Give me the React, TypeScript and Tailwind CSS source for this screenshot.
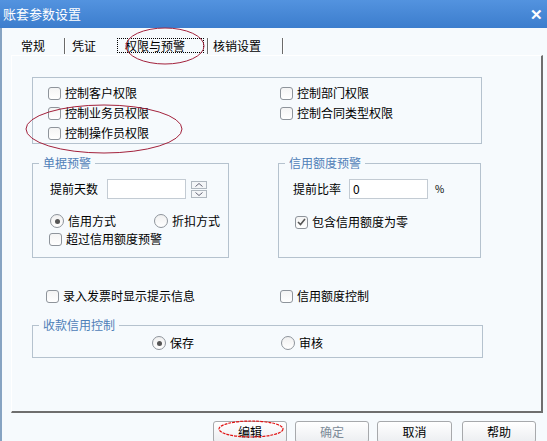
import React from 'react';

// === small controls ===
function Check({ checked = false }: { checked?: boolean }) {
  return (
    <span className="relative flex h-[13px] w-[13px] shrink-0 items-center justify-center rounded-[3px] border border-[#8e949b] bg-gradient-to-b from-[#f4f4f4] to-white">
      {checked && (
        <svg width="9" height="8" viewBox="0 0 9 8">
          <path d="M1 4 L3.5 6.5 L8 1" fill="none" stroke="#555" strokeWidth="1.6" />
        </svg>
      )}
    </span>
  );
}

function Radio({ checked = false }: { checked?: boolean }) {
  return (
    <span className="flex h-[14px] w-[14px] shrink-0 items-center justify-center rounded-full border border-[#8e949b] bg-gradient-to-b from-[#f0f0f0] to-white">
      {checked && <span className="h-[5px] w-[5px] rounded-full bg-[#555]" />}
    </span>
  );
}

function CheckRow({ label, checked }: { label: string; checked?: boolean }) {
  return (
    <div className="flex h-[20px] items-center gap-[4px]">
      <Check checked={checked} />
      <span>{label}</span>
    </div>
  );
}

function RadioRow({ label, checked }: { label: string; checked?: boolean }) {
  return (
    <div className="flex items-center gap-[4px]">
      <Radio checked={checked} />
      <span>{label}</span>
    </div>
  );
}

function Group({ title, className, children }: { title: string; className: string; children: React.ReactNode }) {
  return (
    <div className={`relative border border-[#b5c2ce] ${className}`}>
      <span className="absolute left-[6px] top-[-9px] bg-[#f6fafd] px-[4px] leading-[16px] text-[#4f80b8]">{title}</span>
      {children}
    </div>
  );
}

function Sep() {
  return <span className="block h-[16px] w-[2px] border-l border-r border-l-[#6a6a6a] border-r-white" />;
}

function Btn({ label, disabled }: { label: string; disabled?: boolean }) {
  return (
    <button
      className={`flex h-[22px] w-full items-center justify-center rounded-[3px] border border-[#a7a9ac] bg-gradient-to-b from-white to-[#eceef1] ${
        disabled ? 'text-[#7d8b98]' : 'text-black'
      }`}
    >
      {label}
    </button>
  );
}

export default function App() {
  return (
    <div className="relative h-[441px] w-[547px] overflow-hidden bg-[#f6fafd] text-[12px] leading-[14px] text-black [font-family:'Noto_Sans_CJK_SC',sans-serif]">
      {/* Title bar */}
      <div className="flex h-[28px] items-center justify-between bg-gradient-to-b from-[#5393df] to-[#3c7dcd] pl-[3px] pr-[4px] text-[13px] text-white">
        <span>账套参数设置</span>
        <span className="text-[15px] font-bold">✕</span>
      </div>

      <div className="h-[413px] border-l-[2px] border-[#86a3c2]">
        {/* Tabs */}
        <div className="flex h-[27px] items-center pl-[19px] pt-[8px]">
          <span>常规</span>
          <span className="ml-[19px]"><Sep /></span>
          <span className="ml-[6px]">凭证</span>
          <span className="ml-[21px] w-[87px] border border-dotted border-black pl-[7px] leading-[13px]">权限与预警</span>
          <span className="ml-[3px]"><Sep /></span>
          <span className="ml-[4px]">核销设置</span>
          <span className="ml-[21px]"><Sep /></span>
        </div>

        {/* Tab page */}
        <div className="ml-[9px] h-[358px] w-[532px] border-b-2 border-l border-r-2 border-t border-b-[#6e6e6e] border-l-white border-r-[#6e6e6e] border-t-white pl-[20px] pt-[21px]">
          <div className="flex h-[67px] w-[450px] border border-[#b5c2ce] pl-[15px] pt-[5px]">
            <div className="w-[232px]">
              <CheckRow label="控制客户权限" />
              <CheckRow label="控制业务员权限" />
              <CheckRow label="控制操作员权限" />
            </div>
            <div>
              <CheckRow label="控制部门权限" />
              <CheckRow label="控制合同类型权限" />
            </div>
          </div>

          <div className="mt-[19px] flex gap-[49px]">
            <Group title="单据预警" className="h-[95px] w-[197px] pl-[17px] pt-[15px]">
              <div className="flex items-center">
                <span>提前天数</span>
                <span className="ml-[9px] h-[20px] w-[79px] border border-[#c3cbd3] bg-white" />
                <span className="ml-[5px] flex flex-col gap-[1px]">
                  <span className="flex h-[8px] w-[16px] items-center justify-center border border-[#b0b8c0] bg-[#f4f6f8]">
                    <svg width="8" height="4" viewBox="0 0 8 4"><path d="M0.5 3.5 L4 0.5 L7.5 3.5" fill="none" stroke="#667" /></svg>
                  </span>
                  <span className="flex h-[8px] w-[16px] items-center justify-center border border-[#b0b8c0] bg-[#f4f6f8]">
                    <svg width="8" height="4" viewBox="0 0 8 4"><path d="M0.5 0.5 L4 3.5 L7.5 0.5" fill="none" stroke="#667" /></svg>
                  </span>
                </span>
              </div>
              <div className="mt-[15px] flex">
                <div className="w-[104px]"><RadioRow label="信用方式" checked /></div>
                <RadioRow label="折扣方式" />
              </div>
              <div className="mt-[1px] -ml-px"><CheckRow label="超过信用额度预警" /></div>
            </Group>

            <Group title="信用额度预警" className="h-[95px] w-[203px] pl-[14px] pt-[15px]">
              <div className="flex items-center">
                <span>提前比率</span>
                <span className="ml-[8px] flex h-[20px] w-[79px] items-center border border-[#c3cbd3] bg-white pl-[3px]">0</span>
                <span className="ml-[7px] text-[10px]">%</span>
              </div>
              <div className="ml-[2px] mt-[13px]"><CheckRow label="包含信用额度为零" checked /></div>
            </Group>
          </div>

          <div className="mt-[28px] flex pl-[14px]">
            <div className="w-[234px]"><CheckRow label="录入发票时显示提示信息" /></div>
            <CheckRow label="信用额度控制" />
          </div>

          <Group title="收款信用控制" className="mt-[19px] flex h-[33px] w-[451px] items-center pl-[119px] pt-[3px]">
            <div className="w-[129px]"><RadioRow label="保存" checked /></div>
            <RadioRow label="审核" />
          </Group>
        </div>

        {/* Buttons */}
        <div className="mt-[8px] flex justify-end gap-[8px] pr-[11px]">
          <div className="w-[74px]"><Btn label="编辑" /></div>
          <div className="w-[74px]"><Btn label="确定" disabled /></div>
          <div className="mr-[2px] w-[75px]"><Btn label="取消" /></div>
          <div className="w-[74px]"><Btn label="帮助" /></div>
        </div>
      </div>

      {/* red annotation marks drawn over the screenshot */}
      <svg className="pointer-events-none absolute left-0 top-0" width="547" height="441">
        <ellipse cx="165" cy="46" rx="39" ry="18" fill="none" stroke="#a3223c" strokeWidth="1" />
        <ellipse cx="104" cy="129" rx="78" ry="24" fill="none" stroke="#a3223c" strokeWidth="1" />
        <ellipse cx="251" cy="429" rx="32" ry="8" fill="none" stroke="#e01010" strokeWidth="1.2" strokeDasharray="3 1" />
      </svg>
    </div>
  );
}
